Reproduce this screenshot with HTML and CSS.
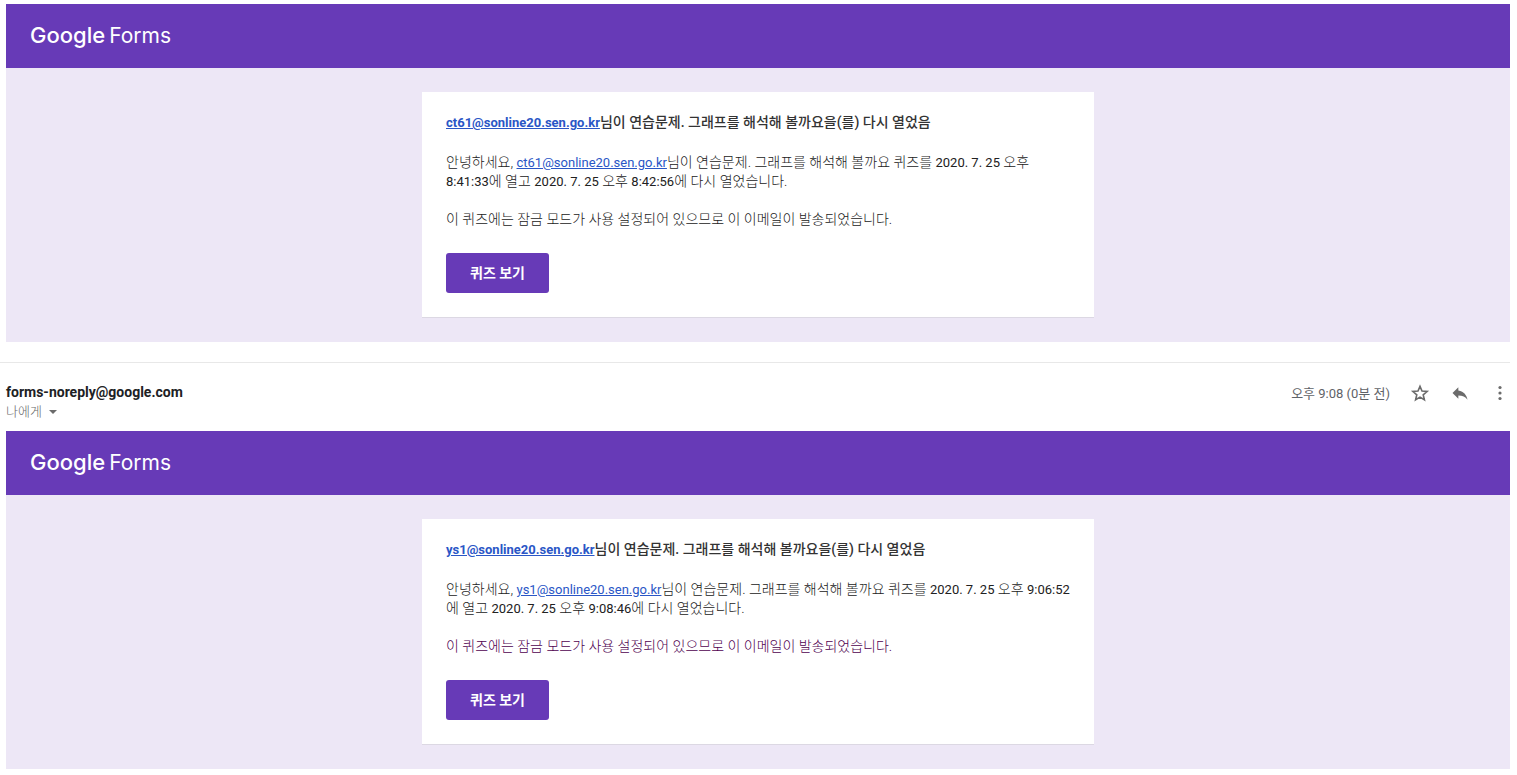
FILE: index.html
```html
<!DOCTYPE html>
<html lang="ko">
<head>
    <meta charset="UTF-8">
    <meta name="viewport" content="width=device-width, initial-scale=1.0">
    <title>Google Forms</title>
    <link rel="stylesheet" href="styles.css">
</head>
<body>
    <main>
        <article class="message">
            <div class="banner">
                <div class="logo"><span class="logo-google">Google</span><span class="logo-forms">Forms</span></div>
            </div>
            <div class="content">
                <div class="card">
                    <h2><a href="mailto:ct61@sonline20.sen.go.kr">ct61@sonline20.sen.go.kr</a>님이 연습문제. 그래프를 해석해 볼까요을(를) 다시 열었음</h2>
                    <p>안녕하세요, <a href="mailto:ct61@sonline20.sen.go.kr">ct61@sonline20.sen.go.kr</a>님이 연습문제. 그래프를 해석해 볼까요 퀴즈를 <span class="date">2020. 7. 25</span> 오후 <span class="date">8:41:33</span>에 열고 <span class="date">2020. 7. 25</span> 오후 <span class="date">8:42:56</span>에 다시 열었습니다.</p>
                    <p>이 퀴즈에는 잠금 모드가 사용 설정되어 있으므로 이 이메일이 발송되었습니다.</p>
                    <a class="quiz-button" href="#">퀴즈 보기</a>
                </div>
            </div>
        </article>

        <header class="mail-header">
            <div class="sender">
                <h3>forms-noreply@google.com</h3>
                <button class="recipient" type="button">나에게
                    <svg width="8" height="4" viewBox="0 0 8 4"><path d="M0 0h8L4 4z" fill="currentColor"/></svg>
                </button>
            </div>
            <div class="mail-actions">
                <span class="time">오후 9:08 (0분 전)</span>
                <button class="icon-button" type="button" aria-label="별표">
                    <svg width="20" height="20" viewBox="0 0 20 20"><path fill="none" stroke="currentColor" stroke-width="1.6" d="M10 3.4l2 4.7 5.1.4-3.9 3.3 1.2 5-4.4-2.7-4.4 2.7 1.2-5-3.9-3.3 5.1-.4z"/></svg>
                </button>
                <button class="icon-button" type="button" aria-label="답장">
                    <svg width="20" height="20" viewBox="0 0 24 24"><path fill="currentColor" d="M10 9V5l-7 7 7 7v-4.1c5 0 8.5 1.6 11 5.1-1-5-4-10-11-11z"/></svg>
                </button>
                <button class="icon-button" type="button" aria-label="더보기">
                    <svg width="20" height="20" viewBox="0 0 20 20"><g fill="currentColor"><circle cx="10" cy="4.5" r="1.6"/><circle cx="10" cy="10" r="1.6"/><circle cx="10" cy="15.5" r="1.6"/></g></svg>
                </button>
            </div>
        </header>

        <article class="message">
            <div class="banner">
                <div class="logo"><span class="logo-google">Google</span><span class="logo-forms">Forms</span></div>
            </div>
            <div class="content">
                <div class="card">
                    <h2><a href="mailto:ys1@sonline20.sen.go.kr">ys1@sonline20.sen.go.kr</a>님이 연습문제. 그래프를 해석해 볼까요을(를) 다시 열었음</h2>
                    <p>안녕하세요, <a href="mailto:ys1@sonline20.sen.go.kr">ys1@sonline20.sen.go.kr</a>님이 연습문제. 그래프를 해석해 볼까요 퀴즈를 <span class="date">2020. 7. 25</span> 오후 <span class="date">9:06:52</span>에 열고 <span class="date">2020. 7. 25</span> 오후 <span class="date">9:08:46</span>에 다시 열었습니다.</p>
                    <p class="quoted">이 퀴즈에는 잠금 모드가 사용 설정되어 있으므로 이 이메일이 발송되었습니다.</p>
                    <a class="quiz-button" href="#">퀴즈 보기</a>
                </div>
            </div>
        </article>
    </main>
</body>
</html>
```
FILE: styles.css
```css
* {
    box-sizing: border-box;
}
body {
    margin: 0;
    background-color: #fff;
    color: #212121;
    font-family: Roboto, "Noto Sans CJK KR", sans-serif;
    font-size: 14px;
    line-height: 19px;
}
main {
    padding: 4px 7px 0 0;
}
.message {
    margin-left: 6px;
}
.banner {
    display: flex;
    align-items: center;
    height: 64px;
    padding: 0 24px 2px;
    background-color: #673ab7;
}
.logo {
    display: flex;
    align-items: baseline;
    gap: 4px;
    color: #fff;
    font-family: Inter, sans-serif;
    font-size: 22px;
    line-height: 28px;
}
.logo-google {
    font-weight: 500;
}
.logo-forms {
    font-size: 21px;
    font-weight: 400;
}
.content {
    padding: 24px;
    background-color: #ede7f6;
}
.card {
    max-width: 672px;
    margin: 0 auto;
    padding: 21px 24px 24px;
    background-color: #fff;
    border-bottom: 1px solid #dcd8e3;
}
.card h2 {
    margin: 0 0 21px;
    color: #333;
    font-size: 14px;
    font-weight: 500;
}
.card p {
    margin: 0 0 19px;
    font-weight: 300;
}
.card p a,
.card h2 a {
    color: #2a56c6;
    font-size: 13px;
    font-weight: 400;
    line-height: 1;
}
.card h2 a {
    font-weight: 700;
}
.date {
    font-size: 13px;
    font-weight: 400;
    line-height: 1;
}
.card .quoted {
    color: #500050;
}
.card .quiz-button {
    display: inline-block;
    margin-top: 5px;
    padding: 0 24px;
    border-radius: 3px;
    background-color: #673ab7;
    color: #fff;
    font-weight: 700;
    line-height: 40px;
    text-decoration: none;
    vertical-align: top;
}
.mail-header {
    display: flex;
    justify-content: space-between;
    margin-top: 20px;
    padding: 19px 0 9px 6px;
    border-top: 1px solid #e8e8e8;
}
.sender h3 {
    margin: 0;
    color: #202124;
    font-size: 14px;
    font-weight: 700;
    line-height: 20px;
}
button {
    border: none;
    background: none;
    color: #6b6b6b;
    font-family: inherit;
    cursor: pointer;
}
.recipient {
    display: flex;
    align-items: center;
    gap: 7px;
    padding: 0;
    font-size: 13px;
    font-weight: 300;
    line-height: 20px;
}
.mail-actions {
    display: flex;
    align-items: center;
    height: 22px;
    gap: 20px;
}
.time {
    color: #5f6368;
    font-size: 13px;
}
.icon-button {
    display: flex;
    padding: 0;
}
```
